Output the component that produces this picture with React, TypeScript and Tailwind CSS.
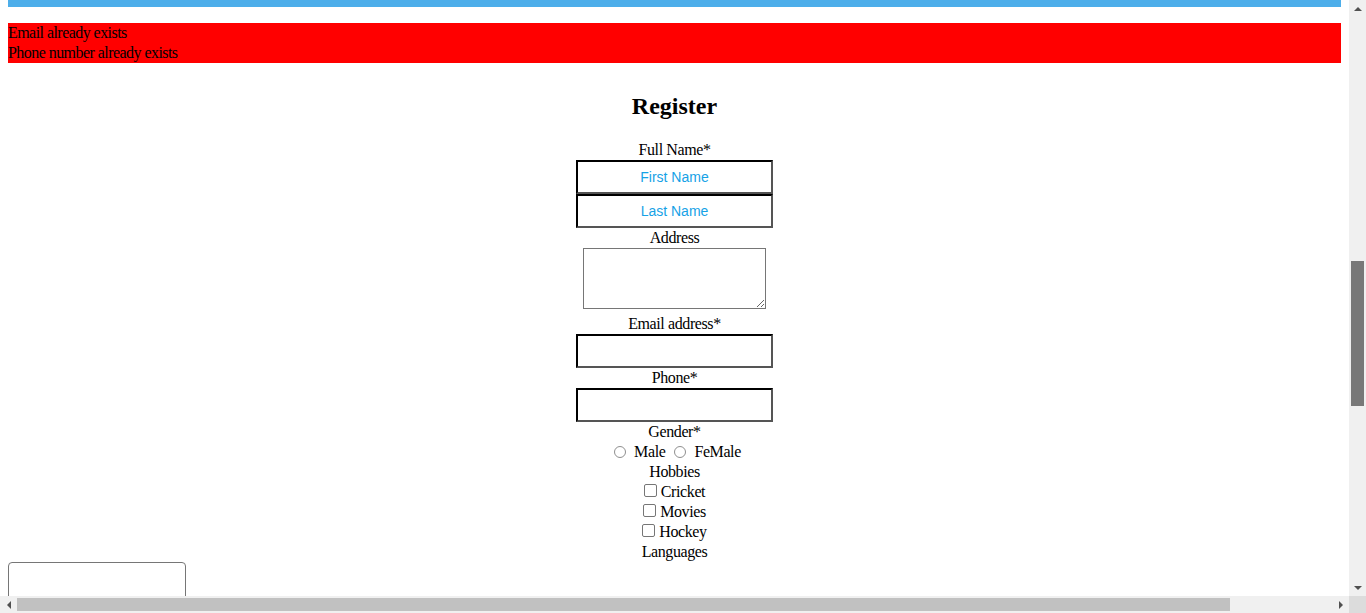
import React from 'react'

const serif = { fontFamily: '"Liberation Serif", "Times New Roman", serif' }

function TextBox({ placeholder }: { placeholder?: string }) {
  return (
    <input
      type="text"
      placeholder={placeholder}
      className="mx-auto block h-[34px] w-[197px] border-2 border-t-black border-l-black border-b-[#555] border-r-[#555] bg-white text-center text-[14px] tracking-normal outline-none placeholder:text-[#16a2e6]"
      style={{ fontFamily: '"Liberation Sans", Arial, sans-serif' }}
    />
  )
}

function Check({ label }: { label: string }) {
  return (
    <div className="leading-[20px]">
      <label className="inline-flex items-start">
        <span className="mt-[2px] mr-[4px] inline-block h-[13px] w-[13px] rounded-[2px] border border-[#767676] bg-white" />
        <span>{label}</span>
      </label>
    </div>
  )
}

function Radio({ label }: { label: string }) {
  return (
    <label className="inline-flex items-center">
      <span className="mr-[8px] inline-block h-[12px] w-[12px] rounded-full border border-[#8f8f8f] bg-white" />
      <span>{label}</span>
    </label>
  )
}

function Arrow({ dir }: { dir: 'up' | 'down' | 'left' | 'right' }) {
  const pts = {
    up: '0,5 4,1 8,5',
    down: '0,1 4,5 8,1',
    left: '5,0 1,4 5,8',
    right: '1,0 5,4 1,8',
  }[dir]
  const size = dir === 'up' || dir === 'down' ? 'w-[8px] h-[6px]' : 'w-[6px] h-[8px]'
  const vb = dir === 'up' || dir === 'down' ? '0 0 8 6' : '0 0 6 8'
  return (
    <svg viewBox={vb} className={size}>
      <polygon points={pts} fill="#505050" />
    </svg>
  )
}

export default function App() {
  return (
    <div className="flex h-[613px] w-[1366px] flex-col overflow-hidden bg-white text-[16px] text-black" style={serif}>
      <div className="flex min-h-0 flex-1">
        <div className="min-w-0 flex-1 overflow-hidden px-[8px]">
          <div className="h-[7px] bg-[#4daeea]" />
          <div className="mt-[16px] bg-[#ff0000] leading-[20px] tracking-[-0.55px]">
            <div>Email already exists</div>
            <div>Phone number already exists</div>
          </div>

          <div className="text-center tracking-[-0.4px]">
            <h2 className="mt-[29px] mb-[20px] text-[24px] font-bold leading-[28px] tracking-normal">Register</h2>

            <div className="leading-[20px]">Full Name*</div>
            <TextBox placeholder="First Name" />
            <TextBox placeholder="Last Name" />

            <div className="leading-[20px]">Address</div>
            <div className="flex justify-center pb-[5px]">
              <textarea className="block h-[61px] w-[183px] resize border border-[#767676] bg-white outline-none" />
            </div>

            <div className="leading-[20px]">Email address*</div>
            <TextBox />
            <div className="leading-[20px]">Phone*</div>
            <TextBox />

            <div className="leading-[20px]">Gender*</div>
            <div className="flex justify-center gap-[9px] pl-[6px] leading-[20px]">
              <Radio label="Male" />
              <Radio label="FeMale" />
            </div>

            <div className="leading-[20px]">Hobbies</div>
            <Check label="Cricket" />
            <Check label="Movies" />
            <Check label="Hockey" />
            <div className="leading-[20px]">Languages</div>
          </div>

          <div className="h-[40px] w-[178px] rounded-[4px] border border-[#767676] bg-white" />
        </div>

        <div className="flex w-[17px] flex-col bg-[#f0f0f0]">
          <div className="flex h-[17px] items-center justify-center">
            <Arrow dir="up" />
          </div>
          <div className="flex-1 px-[2px]">
            <div className="mt-[244px] h-[145px] bg-[#787878]" />
          </div>
          <div className="flex h-[17px] items-center justify-center">
            <Arrow dir="down" />
          </div>
        </div>
      </div>

      <div className="flex h-[17px]">
        <div className="flex flex-1 bg-[#f0f0f0]">
          <div className="flex w-[17px] items-center justify-center">
            <Arrow dir="left" />
          </div>
          <div className="flex flex-1 items-center">
            <div className="h-[13px] w-[1213px] bg-[#c1c1c1]" />
          </div>
          <div className="flex w-[17px] items-center justify-center">
            <Arrow dir="right" />
          </div>
        </div>
        <div className="w-[17px] bg-[#dcdcdc]" />
      </div>
    </div>
  )
}
